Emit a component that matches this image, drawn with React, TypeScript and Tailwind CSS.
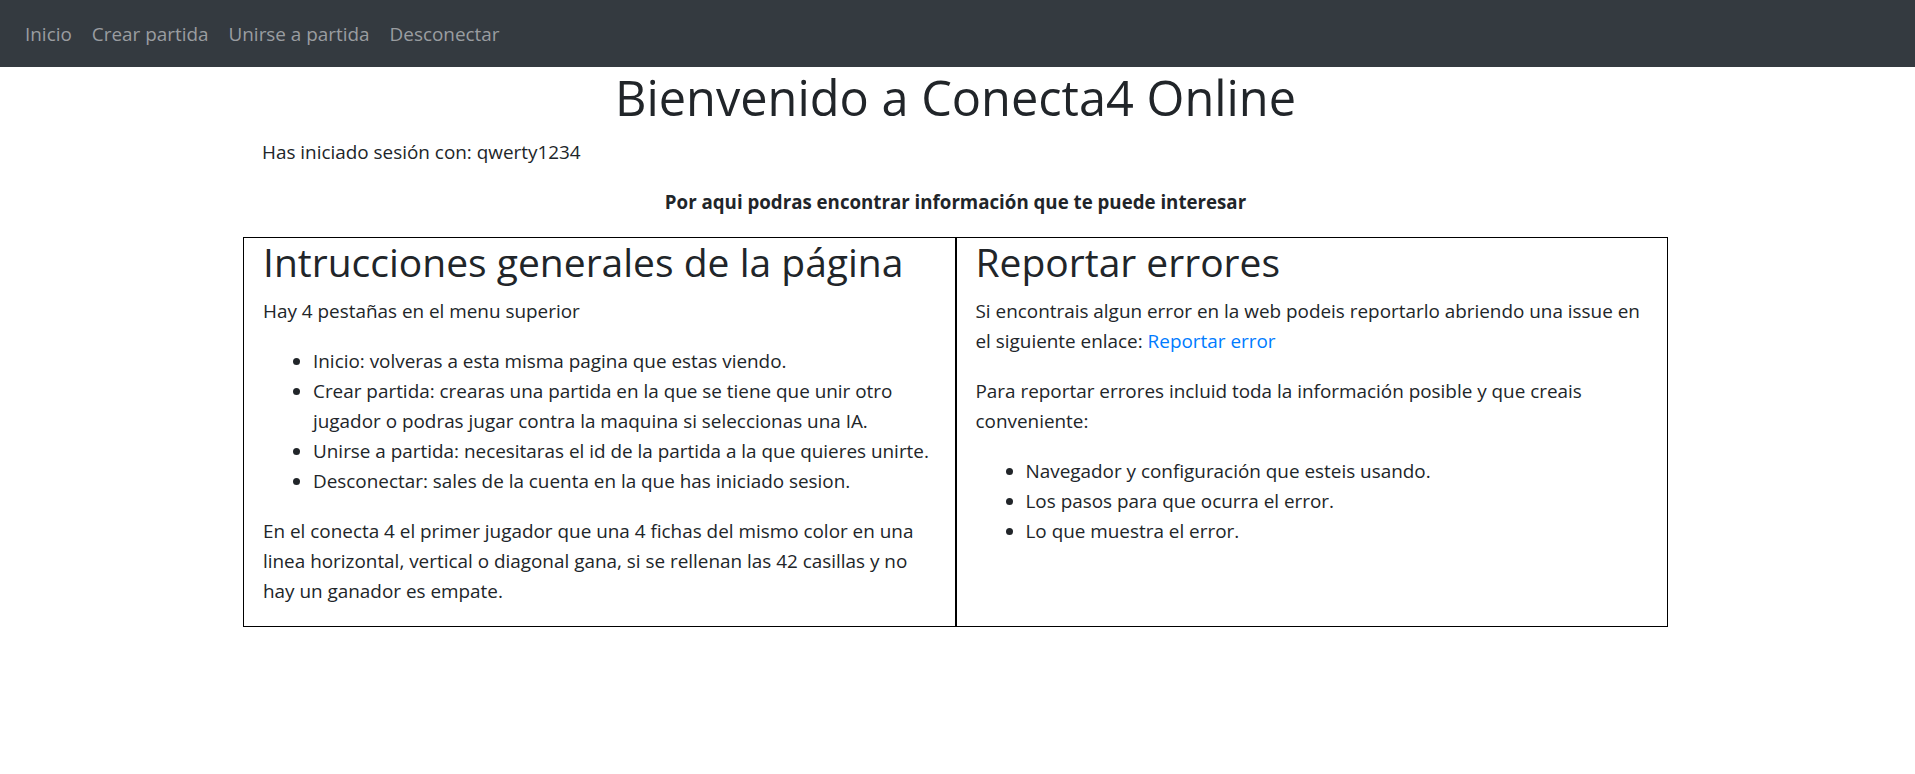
const links = ["Inicio", "Crear partida", "Unirse a partida", "Desconectar"];

const instrucciones = [
  "Inicio: volveras a esta misma pagina que estas viendo.",
  "Crear partida: crearas una partida en la que se tiene que unir otro jugador o podras jugar contra la maquina si seleccionas una IA.",
  "Unirse a partida: necesitaras el id de la partida a la que quieres unirte.",
  "Desconectar: sales de la cuenta en la que has iniciado sesion.",
];

const pasos = [
  "Navegador y configuración que esteis usando.",
  "Los pasos para que ocurra el error.",
  "Lo que muestra el error.",
];

export default function App() {
  return (
    <div className="min-h-screen bg-white font-['Open_Sans',sans-serif] text-[18.9px] leading-[30px] text-[#212529]">
      <nav className="flex h-[67px] items-center bg-[#343a40] pl-[15px]">
        {links.map((l) => (
          <a key={l} href="#" className="px-[10px] text-[#9a9da0]">
            {l}
          </a>
        ))}
      </nav>

      <main className="ml-[243px] w-[1425px]">
        <h1 className="mb-[10px] text-center text-[48.7px] font-medium leading-[60px]">
          Bienvenido a Conecta4 Online
        </h1>
        <p className="mb-[20px] px-[19px]">Has iniciado sesión con: qwerty1234</p>
        <p className="mb-[20px] text-center text-[18.7px] font-bold">
          Por aqui podras encontrar información que te puede interesar
        </p>

        <div className="flex">
          <section className="flex-1 border border-black px-[19px]">
            <h2 className="mb-[10px] text-[39px] font-medium leading-[48px]">
              Intrucciones generales de la página
            </h2>
            <p className="mb-[20px]">Hay 4 pestañas en el menu superior</p>
            <ul className="mb-[20px] list-disc pl-[50px]">
              {instrucciones.map((i) => (
                <li key={i}>{i}</li>
              ))}
            </ul>
            <p className="mb-[20px]">
              En el conecta 4 el primer jugador que una 4 fichas del mismo color en una linea
              horizontal, vertical o diagonal gana, si se rellenan las 42 casillas y no hay un
              ganador es empate.
            </p>
          </section>

          <section className="flex-1 border border-black px-[19px]">
            <h2 className="mb-[10px] text-[39px] font-medium leading-[48px]">Reportar errores</h2>
            <p className="mb-[20px]">
              Si encontrais algun error en la web podeis reportarlo abriendo una issue en el
              siguiente enlace:{" "}
              <a href="#" className="text-[#007bff]">
                Reportar error
              </a>
            </p>
            <p className="mb-[20px]">
              Para reportar errores incluid toda la información posible y que creais conveniente:
            </p>
            <ul className="mb-[20px] list-disc pl-[50px]">
              {pasos.map((p) => (
                <li key={p}>{p}</li>
              ))}
            </ul>
          </section>
        </div>
      </main>
    </div>
  );
}
